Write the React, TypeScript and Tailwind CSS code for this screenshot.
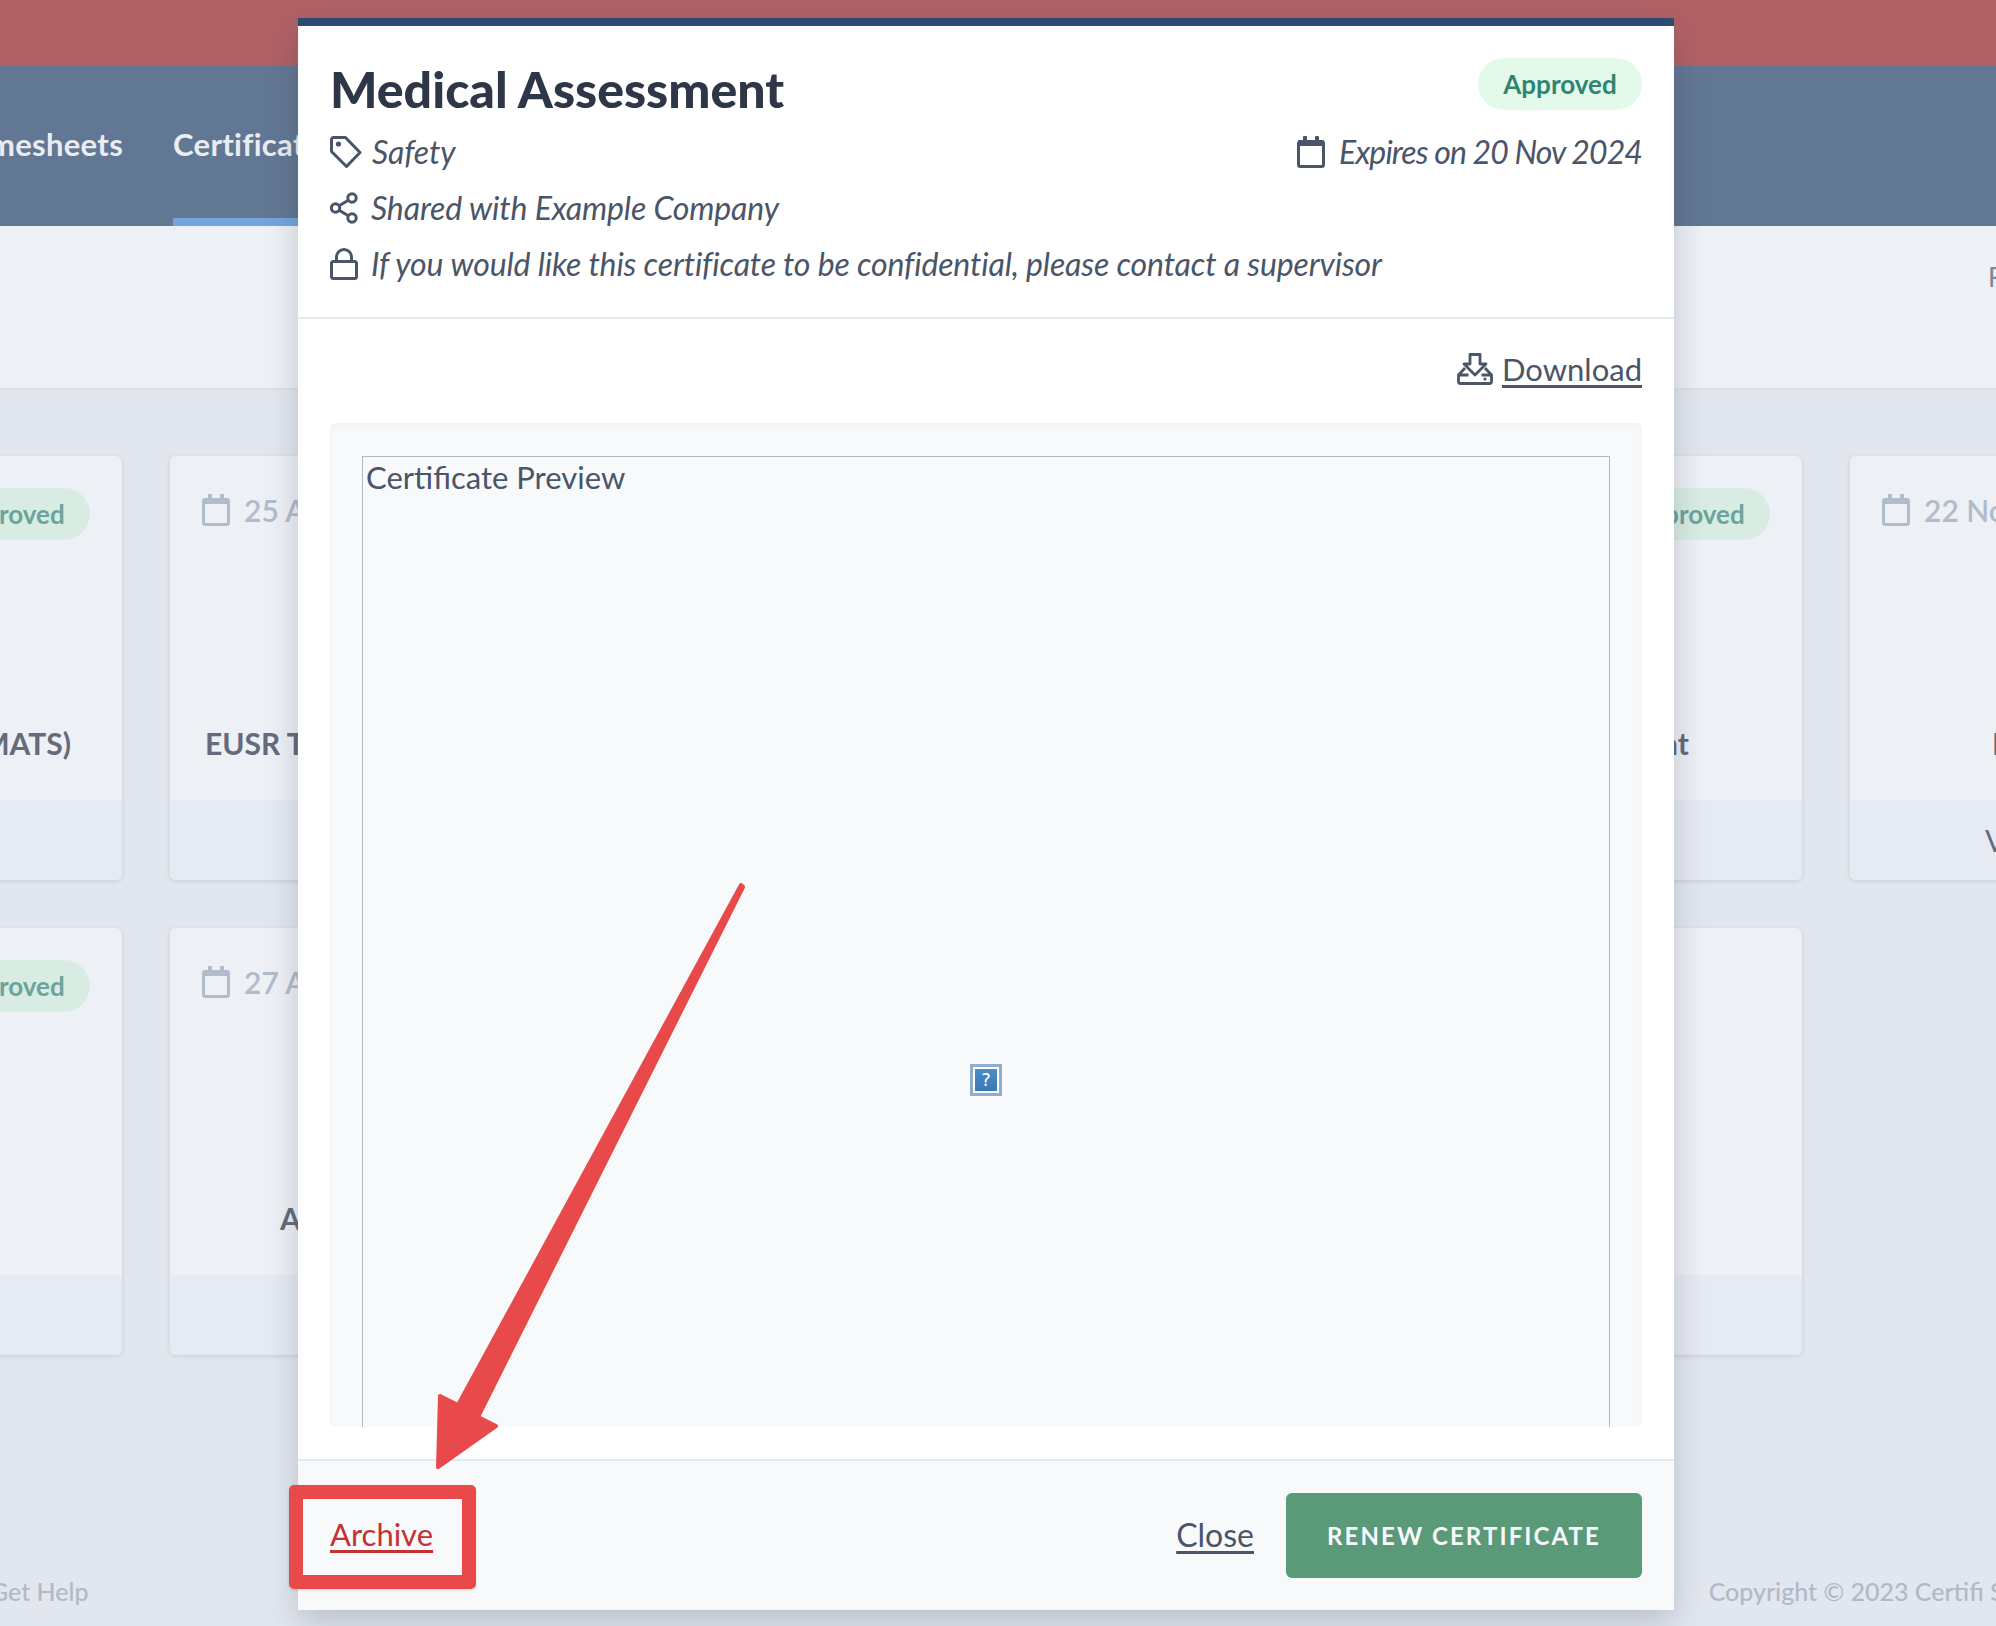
type Card = {
  date?: string;
  title?: string;
  titleClass?: string;
  pill?: boolean;
  view?: string;
};

const cards: Card[] = [
  { title: 'Highways (MATS)', titleClass: 'text-right pr-[51px]', pill: true },
  { date: '25 Apr 2024', title: 'EUSR Training', titleClass: 'pl-[35px]' },
  { date: '02 May 2024', title: 'First Aid', titleClass: 'text-center' },
  { title: 'Asbestos', titleClass: 'text-center', pill: true },
  { title: 'Risk Assessment', titleClass: 'text-right pr-[113px]', pill: true },
  { date: '22 Nov 2024', title: 'IPAF Operator', titleClass: 'pl-[142px]', view: 'View' },
  { pill: true },
  { date: '27 Apr 2024', title: 'Abrasive Wheels', titleClass: 'pl-[110px] pt-[3px]' },
  { date: '30 Jul 2024', title: 'Working at Height', titleClass: 'text-center' },
  { date: '18 Aug 2024', title: 'Manual Handling', titleClass: 'text-center' },
  {},
];

function CalendarIcon({ className }: { className?: string }) {
  return (
    <svg viewBox="0 0 28 32" className={className} fill="none">
      <rect x="1.5" y="5.5" width="25" height="25" rx="2" stroke="currentColor" strokeWidth="3" />
      <rect x="1.5" y="4" width="25" height="6" fill="currentColor" />
      <rect x="6" y="0" width="4" height="6" rx="1" fill="currentColor" />
      <rect x="18" y="0" width="4" height="6" rx="1" fill="currentColor" />
    </svg>
  );
}

function TagIcon() {
  return (
    <svg viewBox="0 0 32 32" className="h-8 w-8 shrink-0 text-[#4a5568]" fill="none" stroke="currentColor" strokeWidth="3" strokeLinejoin="round">
      <path d="M3.5 1.5H15.5L30 16.5L16.5 30.5L1.5 15.5V3.5A2 2 0 0 1 3.5 1.5Z" />
      <circle cx="8.5" cy="8" r="2.6" fill="currentColor" stroke="none" />
    </svg>
  );
}

function ShareIcon() {
  return (
    <svg viewBox="0 0 28 32" className="h-8 w-7 shrink-0 text-[#4a5568]" fill="none" stroke="currentColor" strokeWidth="3">
      <circle cx="22" cy="6" r="4.2" />
      <circle cx="5.5" cy="16" r="4.2" />
      <circle cx="22" cy="26" r="4.2" />
      <path d="M9.2 13.8L18.3 8.2M9.2 18.2L18.3 23.8" />
    </svg>
  );
}

function LockIcon() {
  return (
    <svg viewBox="0 0 28 32" className="h-8 w-7 shrink-0 text-[#4a5568]" fill="none" stroke="currentColor" strokeWidth="3">
      <rect x="1.5" y="13.5" width="25" height="17" rx="2" />
      <path d="M6.5 13V9a7.5 7.5 0 0 1 15 0V13" />
    </svg>
  );
}

function DownloadIcon() {
  return (
    <svg viewBox="0 0 36 32" className="h-8 w-9 shrink-0 text-[#4a5568]" fill="none" stroke="currentColor" strokeWidth="2.8" strokeLinejoin="round">
      <path d="M13 1.5H23V11H29L18 22L7 11H13Z" />
      <path d="M8 15L1.5 22V28.5A2 2 0 0 0 3.5 30.5H32.5A2 2 0 0 0 34.5 28.5V22L28 15" />
      <path d="M1.5 22H11.5M24.5 22H34.5" />
      <circle cx="28" cy="26" r="1.6" fill="currentColor" stroke="none" />
    </svg>
  );
}

function Pill({ muted }: { muted?: boolean }) {
  return (
    <span
      className={`flex h-[52px] w-[164px] shrink-0 items-center justify-center rounded-full text-[26px] font-bold ${
        muted ? 'bg-[#d9ece4] text-[#6ba49b]' : 'bg-[#e3f9e9] text-[#2f8571]'
      }`}
    >
      Approved
    </span>
  );
}

export default function App() {
  return (
    <div className="relative flex h-[1626px] w-[1996px] flex-col overflow-hidden bg-[#e2e7ef] font-['Lato',sans-serif]">
      <div className="h-[66px] shrink-0 bg-[#b16165]" />

      {/* Nav */}
      <nav className="-ml-[38px] flex h-[160px] shrink-0 gap-[50px] bg-[#627793] text-[31px] font-bold tracking-[0.3px] text-[#e9edf3]">
        <a className="flex items-center whitespace-nowrap border-b-8 border-transparent pt-1">Timesheets</a>
        <a className="flex items-center whitespace-nowrap border-b-8 border-[#74a4dc] pt-1">Certificates</a>
      </nav>

      <div className="flex h-[164px] shrink-0 border-b-2 border-[#dde2ea] bg-[#edf0f5] pl-[1988px] pt-[32px] text-[26px] text-[#7c8699]">
        <span className="whitespace-nowrap">Filter</span>
      </div>

      {/* Cards */}
      <div className="-ml-[250px] grid shrink-0 grid-cols-[repeat(6,372px)] grid-rows-[424px_427px] gap-12 pt-[66px]">
        {cards.map((card, i) => (
          <div key={i} className="flex flex-col overflow-hidden rounded-md bg-[#edf0f5] shadow-[0_1px_4px_rgba(60,70,90,0.18)]">
            <div className="flex-1 p-8">
              <div className="flex h-[52px] items-center justify-between">
                <div className="mb-2 flex items-center gap-[14px] text-[30px] font-semibold text-[#b0bccb]">
                  {card.date && <CalendarIcon className="h-8 w-7" />}
                  <span className="whitespace-nowrap">{card.date}</span>
                </div>
                {card.pill && <Pill muted />}
              </div>
              <div className={`-mx-8 mt-[183px] whitespace-nowrap text-[30px] font-bold leading-[40px] text-[#636b7c] ${card.titleClass ?? ''}`}>
                {card.title}
              </div>
            </div>
            <div className="flex h-[80px] shrink-0 items-center bg-[#e6eaf2] pl-[135px] text-[30px] text-[#636b7c]">{card.view}</div>
          </div>
        ))}
      </div>

      <footer className="-ml-[10px] mt-[220px] flex text-[25px] font-medium leading-8 text-[#b0b9c8]">
        <span className="whitespace-nowrap">Get Help</span>
        <span className="ml-[1620px] whitespace-nowrap">Copyright © 2023 Certifi Software</span>
      </footer>

      {/* Modal */}
      <div className="absolute left-[298px] top-[18px] flex h-[1592px] w-[1376px] flex-col border-t-8 border-[#2c4a72] bg-white text-[#4a5568] shadow-[0_12px_30px_rgba(40,50,70,0.22)]">
        <header className="flex h-[293px] shrink-0 flex-col border-b-2 border-[#e2e8f0] px-8 pt-[33px]">
          <div className="flex items-start justify-between">
            <h1 className="text-[50px] font-black leading-[60px] text-[#2d3748]">Medical Assessment</h1>
            <div className="-mt-px"><Pill /></div>
          </div>
          <div className="mt-[17px] flex h-8 items-center justify-between text-[32px] italic tracking-[-0.14px]">
            <div className="flex items-center gap-[10px]">
              <TagIcon />
              <span>Safety</span>
            </div>
            <div className="flex items-center gap-[14px]">
              <CalendarIcon className="h-8 w-7" />
              <span className="tracking-[-0.9px]">Expires on 20 Nov 2024</span>
            </div>
          </div>
          <div className="mt-[24px] flex h-8 items-center gap-[13px] text-[32px] italic tracking-[-0.14px]">
            <ShareIcon />
            <span>Shared with Example Company</span>
          </div>
          <div className="mt-[24px] flex h-8 items-center gap-[13px] text-[32px] italic tracking-[-0.14px]">
            <LockIcon />
            <span>If you would like this certificate to be confidential, please contact a supervisor</span>
          </div>
        </header>

        <div className="flex min-h-0 flex-1 flex-col px-8">
          <div className="flex h-[104px] shrink-0 items-center justify-end gap-[9px] pb-[4px] text-[31px]">
            <DownloadIcon />
            <a className="underline underline-offset-4">Download</a>
          </div>
          <div className="h-[1004px] shrink-0 overflow-hidden rounded-md bg-[#f8f9fb] px-8 pt-[33px] shadow-[inset_0_4px_6px_rgba(0,0,0,0.03)]">
            <div className="relative h-[1100px] border border-[#b5b8bd] pl-[3px] text-[31px] leading-[40px]">
              Certificate Preview
              <div className="absolute left-[607px] top-[607px] flex h-8 w-8 items-center justify-center border-[3px] border-[#8fadd0] bg-white p-[2px]">
                <span className="flex h-full w-full items-center justify-center bg-gradient-to-b from-[#4a8ec8] to-[#3a78b5] font-['DejaVu_Sans',sans-serif] text-[18px] leading-none text-white">?</span>
              </div>
            </div>
          </div>
        </div>

        <footer className="flex h-[151px] shrink-0 items-center justify-between border-t-2 border-[#e2e8f0] bg-[#f8f9fb] px-8">
          <a className="pb-[2px] text-[31px] text-[#c53030] underline underline-offset-4">Archive</a>
          <div className="flex items-center gap-8">
            <a className="pb-[2px] text-[32px] underline underline-offset-4">Close</a>
            <button className="h-[85px] w-[356px] rounded-md bg-[#5b9a78] text-[24px] font-bold tracking-[2.1px] text-[#f7fafc]">RENEW CERTIFICATE</button>
          </div>
        </footer>
      </div>

      {/* Annotation */}
      <div className="absolute left-[289px] top-[1485px] h-[104px] w-[187px] rounded-[5px] border-[14px] border-[#e8494a] shadow-[0_1px_3px_rgba(0,0,0,0.15)]" />
      <svg className="pointer-events-none absolute left-0 top-0 h-[1626px] w-[1996px]" viewBox="0 0 1996 1626">
        <polygon
          points="741,885 743,887 478,1417 496,1426 438,1467 440,1396 458,1405"
          fill="#e8494a"
          stroke="#e8494a"
          strokeWidth="4"
          strokeLinejoin="round"
        />
      </svg>
    </div>
  );
}
